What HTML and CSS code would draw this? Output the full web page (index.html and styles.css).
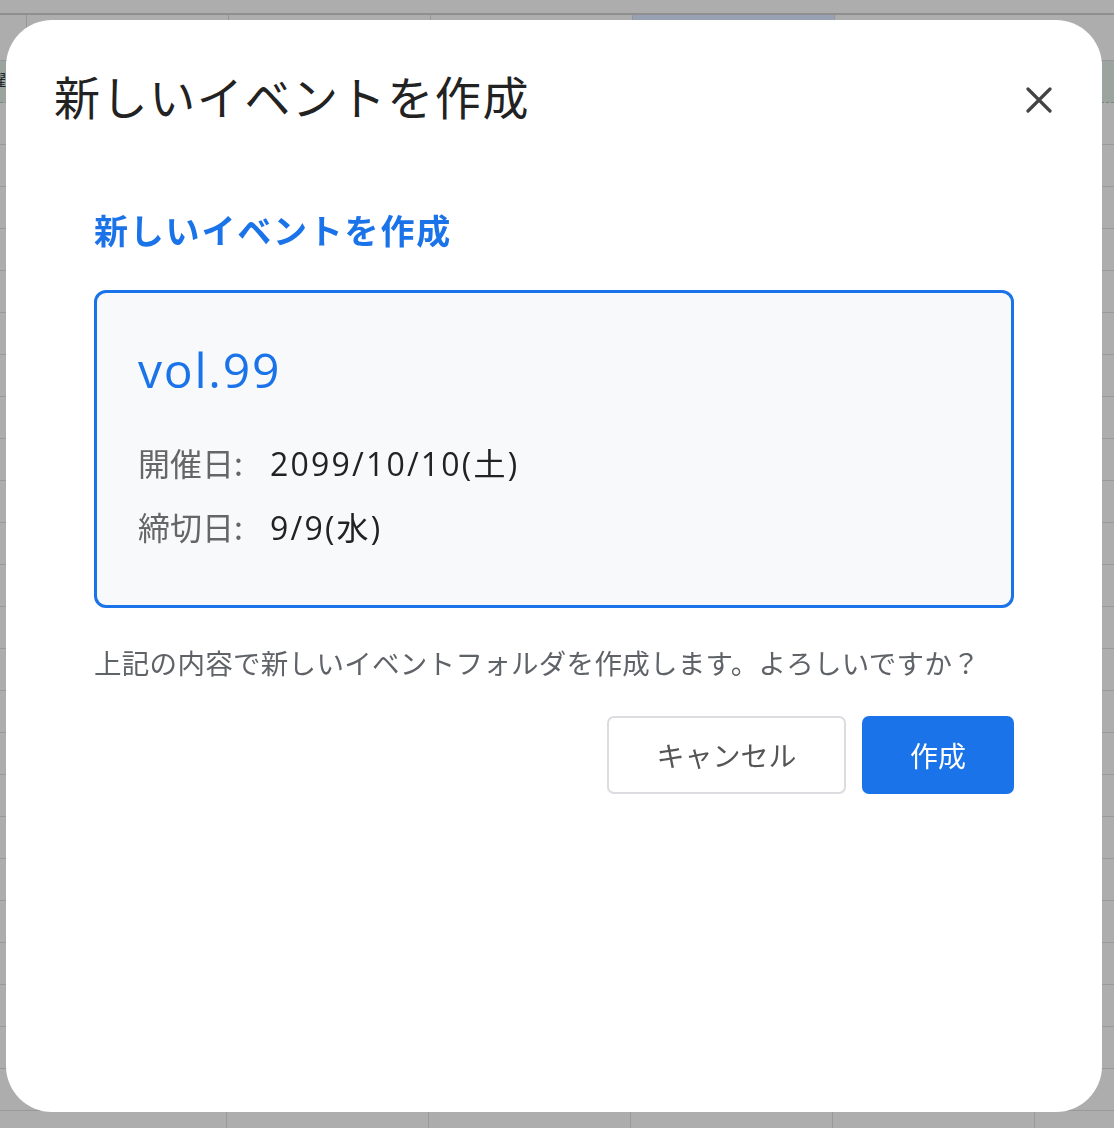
FILE: index.html
```html
<!DOCTYPE html>
<html lang="ja">
<head>
<meta charset="utf-8">
<title>新しいイベントを作成</title>
<link rel="stylesheet" href="styles.css">
</head>
<body>
<div class="sheet">
  <div class="toolbar"></div>
  <div class="colhead">
    <div class="corner"></div>
    <div class="col"></div>
    <div class="col"></div>
    <div class="col"></div>
    <div class="col col-selected"></div>
    <div class="col"></div>
  </div>
  <div class="rows">
    <div class="row row-head"><span class="rowlabel">曜</span></div>
  </div>
</div>

<div class="overlay">
  <div class="dialog" role="dialog" aria-labelledby="dlg-title">
    <div class="dialog-header">
      <h1 class="dialog-title" id="dlg-title">新しいイベントを作成</h1>
      <button class="close-btn" aria-label="閉じる">
        <svg width="26" height="26" viewBox="0 0 26 26" aria-hidden="true">
          <path d="M2 2 L24 24 M24 2 L2 24" stroke="#444" stroke-width="3.2" stroke-linecap="round" fill="none"/>
        </svg>
      </button>
    </div>
    <div class="dialog-body">
      <h2 class="section-title">新しいイベントを作成</h2>
      <div class="event-card">
        <div class="event-name">vol.99</div>
        <div class="event-rows">
          <div class="event-row"><span class="event-label">開催日:</span><span class="event-value">2099/10/10(土)</span></div>
          <div class="event-row"><span class="event-label">締切日:</span><span class="event-value">9/9(水)</span></div>
        </div>
      </div>
      <p class="confirm-text">上記の内容で新しいイベントフォルダを作成します。よろしいですか？</p>
      <div class="actions">
        <button class="btn btn-cancel">キャンセル</button>
        <button class="btn btn-primary">作成</button>
      </div>
    </div>
  </div>
</div>
</body>
</html>
```

FILE: styles.css
```css
* { box-sizing: border-box; }

html, body {
  margin: 0;
  padding: 0;
  width: 1114px;
  height: 1128px;
  overflow: hidden;
}

body {
  background: #adadad;
  font-family: "Noto Sans CJK JP", "Noto Sans", sans-serif;
}

/* dimmed spreadsheet in the background */
.sheet {
  width: 1114px;
  height: 1128px;
  display: flex;
  flex-direction: column;
}

.toolbar {
  height: 15px;
  border-bottom: 2px solid #8f8f8f;
  background: #adadad;
}

.colhead {
  height: 46px;
  display: flex;
  border-bottom: 1px solid #969696;
}

.corner {
  width: 26px;
}

.col {
  width: 202px;
  border-left: 1px solid #969696;
}

.col-selected {
  background: #97a1b3;
}

.rows {
  flex: 1;
  background-color: #adadad;
  background-image:
    repeating-linear-gradient(to bottom, transparent 0, transparent 41px, #999 41px, #999 42px),
    repeating-linear-gradient(to right, transparent 0, transparent 201px, #999 201px, #999 202px);
  background-position: 0 0, 25px 0;
}

.row {
  height: 42px;
}

.row-head {
  background: #9ca49f;
  border-bottom: 1px dashed #7d857f;
  overflow: hidden;
}

.rowlabel {
  display: block;
  margin-left: -10px;
  font-size: 16px;
  line-height: 36px;
  color: #222;
}

/* overlay + dialog */
.overlay {
  position: fixed;
  inset: 0;
  padding: 20px 12px 16px 6px;
  display: flex;
}

.dialog {
  flex: 1;
  background: #fff;
  border-radius: 46px;
  display: flex;
  flex-direction: column;
}

.dialog-header {
  display: flex;
  align-items: center;
  justify-content: space-between;
  padding: 45px 50px 0 48px;
}

.dialog-title {
  margin: 0;
  font-size: 46px;
  line-height: 60px;
  font-weight: 400;
  color: #222;
  letter-spacing: 1.6px;
}

.close-btn {
  border: 0;
  background: transparent;
  padding: 0;
  width: 26px;
  height: 26px;
  display: flex;
  margin-top: 10px;
}

.dialog-body {
  padding: 81px 88px 0 88px;
  display: flex;
  flex-direction: column;
}

.section-title {
  margin: 0;
  font-size: 34px;
  line-height: 48px;
  font-weight: 700;
  color: #1a73e8;
  letter-spacing: 1.8px;
}

.event-card {
  margin-top: 36px;
  height: 318px;
  border: 3px solid #1a73e8;
  border-radius: 12px;
  background: #f8f9fb;
  padding: 45px 41px 0 41px;
}

.event-name {
  font-family: "Open Sans", "Noto Sans CJK JP", sans-serif;
  font-size: 48px;
  line-height: 64px;
  color: #1a73e8;
  letter-spacing: 1.8px;
}

.event-rows {
  margin-top: 28px;
  display: flex;
  flex-direction: column;
}

.event-row {
  display: flex;
  align-items: center;
  height: 64px;
  font-size: 32px;
}

.event-label {
  width: 132px;
  color: #666;
}

.event-value {
  font-family: "Open Sans", "Noto Sans CJK JP", sans-serif;
  color: #222;
  letter-spacing: 2.2px;
}

.confirm-text {
  margin: 34px 0 0 0;
  font-size: 27.5px;
  line-height: 40px;
  color: #5f6368;
  letter-spacing: 0.3px;
}

.actions {
  margin-top: 34px;
  display: flex;
  justify-content: flex-end;
  gap: 16px;
}

.btn {
  height: 78px;
  border-radius: 7px;
  font-family: "Noto Sans CJK JP", sans-serif;
  font-size: 28px;
  padding: 0;
}

.btn-cancel {
  width: 239px;
  background: #fff;
  border: 2px solid #dadce0;
  color: #555;
}

.btn-primary {
  width: 152px;
  background: #1a73e8;
  border: 0;
  color: #fff;
}
```
